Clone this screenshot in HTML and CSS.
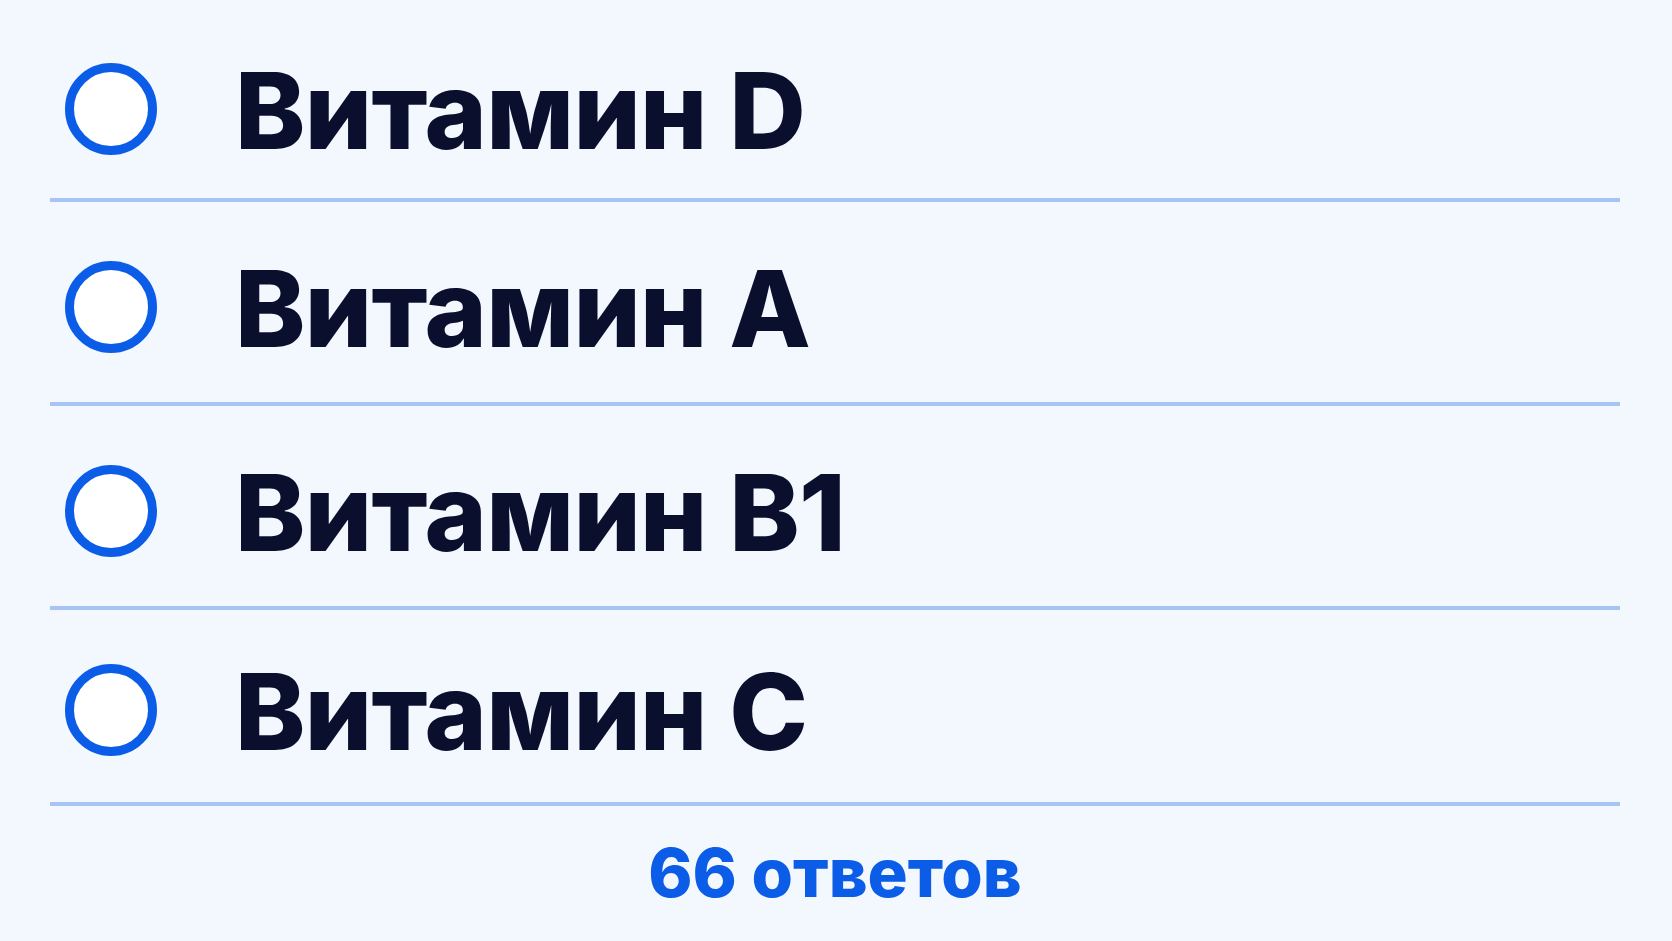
FILE: index.html
```html
<!DOCTYPE html>
<html lang="ru">
<head>
    <meta charset="UTF-8">
    <meta name="viewport" content="width=device-width, initial-scale=1.0">
    <title>Опрос: витамины</title>
    <link rel="stylesheet" href="styles.css">
</head>
<body>
    <div class="poll">
        <label class="option">
            <input type="radio" name="vitamin" value="d">
            <span class="radio"></span>
            <span class="option-text">Витамин D</span>
        </label>
        <label class="option">
            <input type="radio" name="vitamin" value="a">
            <span class="radio"></span>
            <span class="option-text">Витамин A</span>
        </label>
        <label class="option">
            <input type="radio" name="vitamin" value="b1">
            <span class="radio"></span>
            <span class="option-text">Витамин B1</span>
        </label>
        <label class="option">
            <input type="radio" name="vitamin" value="c">
            <span class="radio"></span>
            <span class="option-text">Витамин C</span>
        </label>

        <div class="votes">66 ответов</div>
    </div>
</body>
</html>
```

FILE: styles.css
```css
body {
    margin: 0;
    background-color: #f3f7fe;
    font-family: Inter, "Noto Sans", sans-serif;
    color: #0b0f2e;
}
.poll {
    padding: 0 52px 0 50px;
}
.option {
    display: flex;
    align-items: center;
    box-sizing: border-box;
    height: 204px;
    padding-top: 10px;
    border-bottom: 4px solid #a6c5f5;
    cursor: pointer;
}
.option:first-of-type {
    height: 202px;
    padding-top: 20px;
}
.option:last-of-type {
    height: 196px;
    padding-top: 8px;
}
.option input {
    display: none;
}
.radio {
    box-sizing: border-box;
    width: 92px;
    height: 92px;
    margin-left: 15px;
    border: 9px solid #0b5de8;
    border-radius: 50%;
    background-color: #fff;
    flex-shrink: 0;
}
.option input:checked + .radio {
    box-shadow: inset 0 0 0 14px #fff;
    background-color: #0b5de8;
}
.option-text {
    margin-left: 78px;
    padding-top: 3px;
    font-size: 106px;
    font-weight: 800;
    letter-spacing: -0.7px;
    line-height: 1;
}
.votes {
    padding-top: 26px;
    text-align: center;
    font-size: 67px;
    font-weight: 800;
    color: #0b5de8;
}
```
